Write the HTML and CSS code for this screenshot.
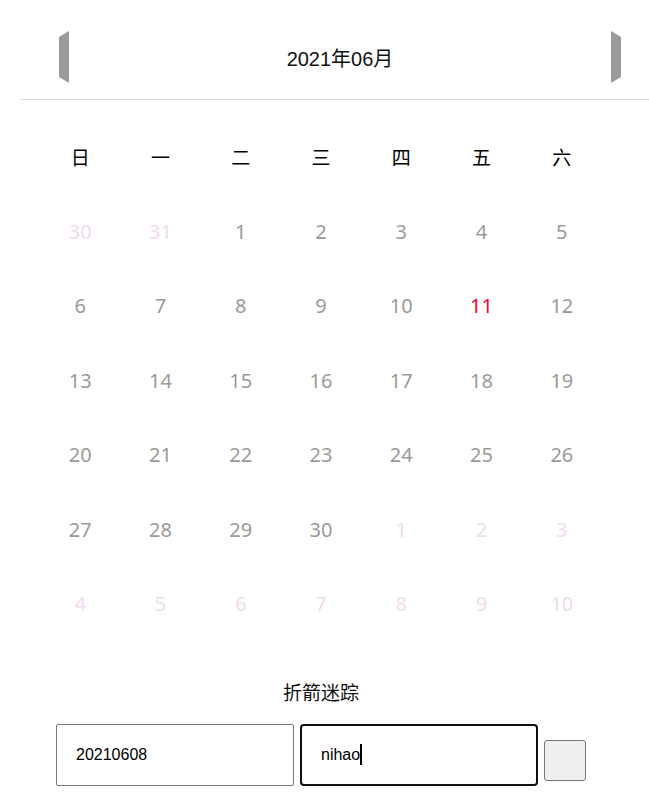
FILE: index.html
```html
<!DOCTYPE html>
<html lang="zh">
<head>
<meta charset="utf-8">
<title>日历</title>
<link rel="stylesheet" href="styles.css">
</head>
<body>
<div class="app">
  <div class="header">
    <span class="arrow arrow-prev"></span>
    <span class="month-title">2021年06月</span>
    <span class="arrow arrow-next"></span>
  </div>
  <div class="calendar">
    <div class="wd">日</div><div class="wd">一</div><div class="wd">二</div><div class="wd">三</div><div class="wd">四</div><div class="wd">五</div><div class="wd">六</div>
    <div class="day other">30</div><div class="day other">31</div><div class="day">1</div><div class="day">2</div><div class="day">3</div><div class="day">4</div><div class="day">5</div>
    <div class="day">6</div><div class="day">7</div><div class="day">8</div><div class="day">9</div><div class="day">10</div><div class="day today">11</div><div class="day">12</div>
    <div class="day">13</div><div class="day">14</div><div class="day">15</div><div class="day">16</div><div class="day">17</div><div class="day">18</div><div class="day">19</div>
    <div class="day">20</div><div class="day">21</div><div class="day">22</div><div class="day">23</div><div class="day">24</div><div class="day">25</div><div class="day">26</div>
    <div class="day">27</div><div class="day">28</div><div class="day">29</div><div class="day">30</div><div class="day other">1</div><div class="day other">2</div><div class="day other">3</div>
    <div class="day other">4</div><div class="day other">5</div><div class="day other">6</div><div class="day other">7</div><div class="day other">8</div><div class="day other">9</div><div class="day other">10</div>
  </div>
  <div class="footer">
    <div class="footer-title">折箭迷踪</div>
    <div class="form-row">
      <div class="field">20210608</div>
      <div class="field focused">nihao<span class="caret"></span></div>
      <button class="btn" type="button"></button>
    </div>
  </div>
</div>
</body>
</html>
```
FILE: styles.css
```css
html, body {
  margin: 0;
  padding: 0;
  background: #fff;
}

.app {
  padding-top: 20px;
  font-family: "Noto Sans", "Noto Sans CJK SC", sans-serif;
}

.header {
  margin-left: 20px;
  width: calc(100% - 20px);
  height: 80px;
  box-sizing: border-box;
  border-bottom: 1px solid #dddddd;
  display: flex;
  justify-content: space-between;
  align-items: flex-start;
  padding: 11px 28px 0 39px;
}

.arrow {
  width: 0;
  height: 40px;
  border-top: 6px solid transparent;
  border-bottom: 6px solid transparent;
}

.arrow-prev {
  border-right: 10px solid #9a9a9a;
}

.arrow-next {
  border-left: 10px solid #9a9a9a;
}

.month-title {
  font-family: "Liberation Sans", "Noto Sans CJK SC", sans-serif;
  font-size: 20px;
  line-height: 52px;
  margin-top: 2px;
  color: #111;
}

.calendar {
  width: 562px;
  margin-left: 40px;
  margin-top: 21px;
  display: grid;
  grid-template-columns: repeat(7, 1fr);
  grid-auto-rows: 74.4px;
  align-items: center;
  justify-items: center;
}

.wd {
  font-family: "Noto Sans CJK SC", sans-serif;
  font-size: 19px;
  color: #000;
  padding-bottom: 4px;
}

.day {
  font-size: 20px;
  color: #9a9a9a;
  padding-bottom: 2px;
}

.day.other {
  color: #efdcef;
}

.day.today {
  color: #ff0033;
}

.footer {
  width: 562px;
  margin-left: 40px;
  display: flex;
  flex-direction: column;
  align-items: center;
}

.footer-title {
  margin-top: 36px;
  font-family: "Noto Sans CJK SC", sans-serif;
  font-size: 19px;
  line-height: 28px;
  color: #111;
}

.form-row {
  margin-top: 18px;
  display: flex;
  align-items: flex-start;
  gap: 6px;
}

.field {
  width: 238px;
  height: 62px;
  box-sizing: border-box;
  border: 1px solid #767676;
  border-radius: 2px;
  padding-left: 19px;
  display: flex;
  align-items: center;
  font-family: "Liberation Sans", Arial, sans-serif;
  font-size: 16px;
  color: #000;
}

.field.focused {
  border: 2px solid #101010;
  border-radius: 4px;
}

.caret {
  display: inline-block;
  width: 2px;
  height: 21px;
  background: #000;
}

.btn {
  margin-top: 16px;
  width: 42px;
  height: 41px;
  box-sizing: border-box;
  background: #efefef;
  border: 1px solid #767676;
  border-radius: 3px;
  padding: 0;
}
```
